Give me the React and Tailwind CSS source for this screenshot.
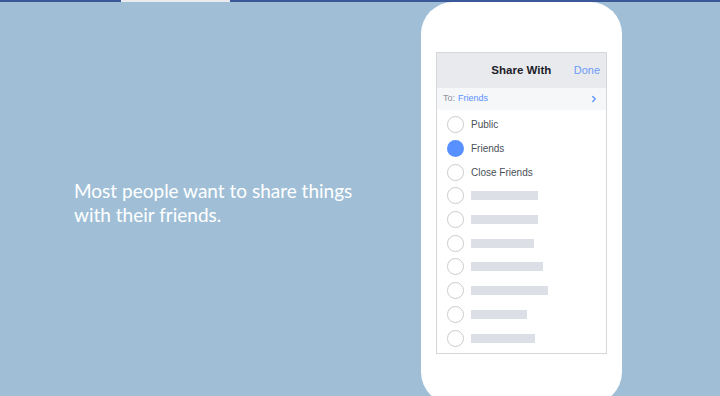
import { ChevronRight } from 'lucide-react';

const options = [
    { label: 'Public' },
    { label: 'Friends', selected: true },
    { label: 'Close Friends' },
    { bar: 67 },
    { bar: 67 },
    { bar: 63 },
    { bar: 72 },
    { bar: 77 },
    { bar: 56 },
    { bar: 64 },
];

function Radio({ selected }) {
    if (selected) {
        return <span className="h-[17px] w-[17px] shrink-0 rounded-full bg-[#5890ff]" />;
    }
    return <span className="h-[17px] w-[17px] shrink-0 rounded-full border border-[#c9cbcf] bg-white" />;
}

export default function App() {
    return (
        <div
            className="flex h-[396px] w-[720px] flex-col overflow-hidden bg-[#a0bfd7]"
            style={{ fontFamily: '"Liberation Sans", Arial, sans-serif' }}
        >
            {/* top strip */}
            <div className="flex h-[2px] shrink-0">
                <div className="w-[121px] bg-[#3b5998]" />
                <div className="w-[109px] bg-[#e9ebee]" />
                <div className="flex-1 bg-[#3b5998]" />
            </div>

            <div className="flex flex-1">
                {/* copy */}
                <div className="w-[421px] shrink-0 pl-[74px] pt-[177px]">
                    <p
                        className="text-[19px] leading-[24px] text-white"
                        style={{ fontFamily: 'Lato, sans-serif' }}
                    >
                        Most people want to share things
                        <br />
                        with their friends.
                    </p>
                </div>

                {/* phone */}
                <div className="h-[402px] w-[201px] shrink-0 rounded-[32px] bg-white px-[15px] pt-[50px]">
                    <div className="flex h-[302px] flex-col border border-[#d6d7da] bg-white">
                        <div className="flex h-[35px] items-center bg-[#e9eaee] pr-[6px]">
                            <span className="flex-1 pl-[32px] text-center text-[11.5px] font-bold text-[#1d2129]">
                                Share With
                            </span>
                            <span className="text-[11px] text-[#6d9bf7]">Done</span>
                        </div>
                        <div className="flex h-[22px] items-center bg-[#f6f7f9] pl-[6px] pr-[7px] text-[9px]">
                            <span className="text-[#90949c]">To:</span>
                            <span className="ml-[3px] flex-1 text-[#5890ff]">Friends</span>
                            <ChevronRight className="h-[10px] w-[10px] text-[#5890ff]" strokeWidth={3} />
                        </div>
                        <div className="flex flex-col pt-[3px]">
                            {options.map((o, i) => (
                                <div key={i} className="flex h-[23.7px] items-center gap-[7px] pl-[10px]">
                                    <Radio selected={o.selected} />
                                    {o.label ? (
                                        <span className="text-[10px] text-[#4b4f56]">{o.label}</span>
                                    ) : (
                                        <span className="h-[9px] bg-[#dddfe6]" style={{ width: o.bar }} />
                                    )}
                                </div>
                            ))}
                        </div>
                    </div>
                </div>
            </div>
        </div>
    );
}
